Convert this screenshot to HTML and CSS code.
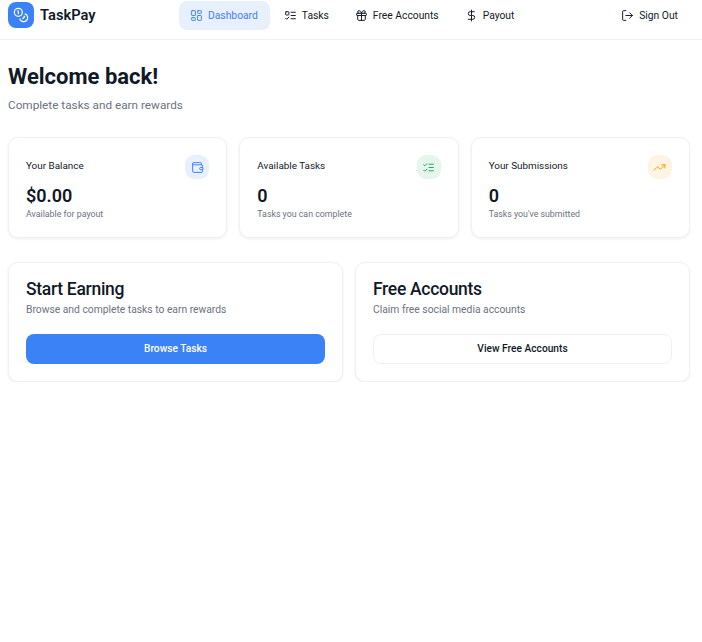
FILE: index.html
```html
<!DOCTYPE html>
<html lang="en">
<head>
  <meta charset="UTF-8">
  <meta name="viewport" content="width=device-width, initial-scale=1.0">
  <title>TaskPay Dashboard</title>
  <link rel="stylesheet" href="styles.css">
</head>
<body>
  <header class="topbar">
    <div class="brand">
      <span class="brand-mark">
        <svg class="icon-brand" viewBox="0 0 24 24"><circle cx="8" cy="8" r="6"/><path d="M18.09 10.37A6 6 0 1 1 10.34 18"/><path d="M7 6h1v4"/><path d="m16.71 13.88.7.71-2.82 2.82"/></svg>
      </span>
      <span class="brand-name">TaskPay</span>
    </div>
    <nav class="nav">
      <a class="nav-item active" href="#">
        <svg class="icon" viewBox="0 0 24 24"><rect x="3" y="3" width="7" height="9" rx="1"/><rect x="14" y="3" width="7" height="5" rx="1"/><rect x="14" y="12" width="7" height="9" rx="1"/><rect x="3" y="16" width="7" height="5" rx="1"/></svg>
        Dashboard
      </a>
      <a class="nav-item" href="#">
        <svg class="icon" viewBox="0 0 24 24"><rect x="3" y="5" width="6" height="6" rx="1"/><path d="m3 17 2 2 4-4"/><path d="M13 6h8"/><path d="M13 12h8"/><path d="M13 18h8"/></svg>
        Tasks
      </a>
      <a class="nav-item" href="#">
        <svg class="icon" viewBox="0 0 24 24"><rect x="3" y="8" width="18" height="4" rx="1"/><path d="M12 8v13"/><path d="M19 12v7a2 2 0 0 1-2 2H7a2 2 0 0 1-2-2v-7"/><path d="M7.5 8a2.5 2.5 0 0 1 0-5A4.8 8 0 0 1 12 8a4.8 8 0 0 1 4.5-5 2.5 2.5 0 0 1 0 5"/></svg>
        Free Accounts
      </a>
      <a class="nav-item" href="#">
        <svg class="icon" viewBox="0 0 24 24"><path d="M12 2v20"/><path d="M17 5H9.5a3.5 3.5 0 0 0 0 7h5a3.5 3.5 0 0 1 0 7H6"/></svg>
        Payout
      </a>
    </nav>
    <a class="signout" href="#">
      <svg class="icon" viewBox="0 0 24 24"><path d="M9 21H5a2 2 0 0 1-2-2V5a2 2 0 0 1 2-2h4"/><path d="m16 17 5-5-5-5"/><path d="M21 12H9"/></svg>
      Sign Out
    </a>
  </header>

  <main class="page">
    <h1>Welcome back!</h1>
    <p class="subtitle">Complete tasks and earn rewards</p>

    <section class="stats">
      <div class="card stat">
        <div class="stat-head">
          <span class="stat-label">Your Balance</span>
          <span class="stat-icon blue">
            <svg class="icon" viewBox="0 0 24 24"><path d="M19 7V4a1 1 0 0 0-1-1H5a2 2 0 0 0 0 4h15a1 1 0 0 1 1 1v4h-3a2 2 0 0 0 0 4h3a1 1 0 0 0 1-1v-2a1 1 0 0 0-1-1"/><path d="M3 5v14a2 2 0 0 0 2 2h15a1 1 0 0 0 1-1v-4"/></svg>
          </span>
        </div>
        <div class="stat-value">$0.00</div>
        <div class="stat-note">Available for payout</div>
      </div>
      <div class="card stat">
        <div class="stat-head">
          <span class="stat-label">Available Tasks</span>
          <span class="stat-icon green">
            <svg class="icon" viewBox="0 0 24 24"><path d="m3 17 2 2 4-4"/><path d="m3 7 2 2 4-4"/><path d="M13 6h8"/><path d="M13 12h8"/><path d="M13 18h8"/></svg>
          </span>
        </div>
        <div class="stat-value">0</div>
        <div class="stat-note">Tasks you can complete</div>
      </div>
      <div class="card stat">
        <div class="stat-head">
          <span class="stat-label">Your Submissions</span>
          <span class="stat-icon orange">
            <svg class="icon" viewBox="0 0 24 24"><polyline points="22 7 13.5 15.5 8.5 10.5 2 17"/><polyline points="16 7 22 7 22 13"/></svg>
          </span>
        </div>
        <div class="stat-value">0</div>
        <div class="stat-note">Tasks you've submitted</div>
      </div>
    </section>

    <section class="actions">
      <div class="card action">
        <h2>Start Earning</h2>
        <p>Browse and complete tasks to earn rewards</p>
        <button class="btn primary" type="button">Browse Tasks</button>
      </div>
      <div class="card action">
        <h2>Free Accounts</h2>
        <p>Claim free social media accounts</p>
        <button class="btn outline" type="button">View Free Accounts</button>
      </div>
    </section>
  </main>
</body>
</html>
```

FILE: styles.css
```css
* { box-sizing: border-box; }
body { margin: 0; background: #fff; color: #111827; font-family: Roboto, "Liberation Sans", sans-serif; }
a { color: inherit; text-decoration: none; }
svg { fill: none; stroke: currentColor; stroke-width: 1.8; stroke-linecap: round; stroke-linejoin: round; flex: none; }
.icon { width: 13px; height: 13px; }

.topbar { display: flex; align-items: flex-start; height: 40px; padding: 1px 12px 0 8px; border-bottom: 1px solid #edf0f3; }
.brand { display: flex; align-items: center; gap: 6px; width: 171px; padding-top: 1px; }
.brand-mark { display: flex; align-items: center; justify-content: center; width: 26px; height: 26px; border-radius: 8px; background: #3b82f6; color: #fff; }
.icon-brand { width: 16px; height: 16px; }
.brand-name { font-size: 14.7px; font-weight: 600; }
.nav { display: flex; gap: 3px; }
.nav-item { display: flex; align-items: center; gap: 5px; height: 29px; padding: 0 12px 0 11px; border-radius: 8px; font-size: 10.3px; }
.nav-item.active { background: #e9f0fd; color: #3b82f6; }
.signout { display: flex; align-items: center; gap: 5px; height: 29px; margin-left: auto; padding: 0 12px; font-size: 10.3px; }

.page { padding: 24px 12px 0 8px; }
h1 { margin: 0; font-size: 22px; line-height: 26px; font-weight: 700; }
.subtitle { margin: 7px 0 0; font-size: 11.75px; line-height: 16px; color: #6b7280; }

.card { background: #fff; border: 1px solid #eff1f4; border-radius: 10px; box-shadow: 0 1px 3px rgba(0,0,0,0.07); }
.stats { display: grid; grid-template-columns: repeat(3, 1fr); gap: 12px; margin-top: 24px; }
.stat { height: 101px; padding: 17px 17px 0; }
.stat-head { display: flex; justify-content: space-between; align-items: center; height: 24px; }
.stat-label { padding-bottom: 3px; font-size: 9.9px; }
.stat-icon { display: flex; align-items: center; justify-content: center; width: 24px; height: 24px; border-radius: 9px; }
.stat-icon.blue { background: #e9f0fd; color: #3b82f6; }
.stat-icon.green { background: #e6f6ec; color: #22a559; }
.stat-icon.orange { background: #fef4e4; color: #f59e0b; }
.stat-value { margin-top: 7px; font-size: 18px; line-height: 20px; font-weight: 600; }
.stat-note { margin-top: 2px; font-size: 8.8px; line-height: 12px; color: #6b7280; }

.actions { display: grid; grid-template-columns: repeat(2, 1fr); gap: 12px; margin-top: 24px; }
.action { height: 120px; padding: 16px 17px 0; }
.action h2 { margin: 0; font-size: 17.5px; line-height: 20px; font-weight: 500; letter-spacing: -0.3px; }
.action p { margin: 3px 0 0; font-size: 10.3px; line-height: 16px; color: #6b7280; }
.btn { display: block; width: 100%; height: 30px; margin-top: 16px; padding: 0 0 2px; border-radius: 8px; font-family: inherit; font-size: 10.2px; font-weight: 500; cursor: pointer; }
.btn.primary { background: #3b82f6; border: none; color: #fff; }
.btn.outline { background: #fff; border: 1px solid #eff1f4; color: #111827; }
```
